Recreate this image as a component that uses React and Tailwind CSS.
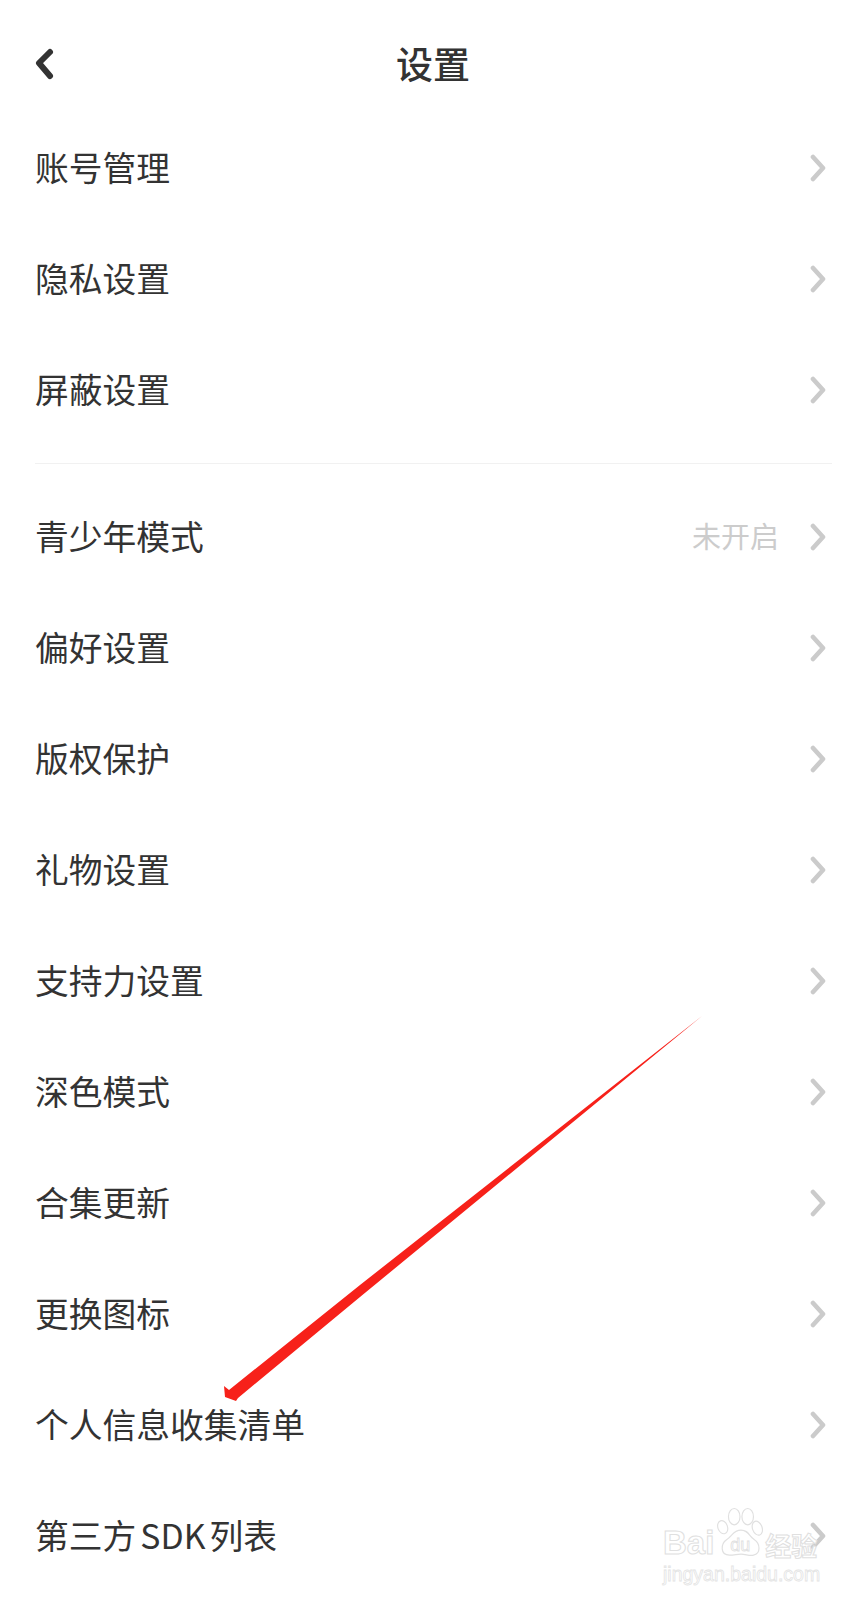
const font = { fontFamily: '"Noto Sans CJK SC", "Liberation Sans", sans-serif' };
const latin = { fontFamily: '"Liberation Sans", sans-serif' };

const groupOne = ['账号管理', '隐私设置', '屏蔽设置'];
const groupTwo = [
  { label: '青少年模式', value: '未开启' },
  { label: '偏好设置' },
  { label: '版权保护' },
  { label: '礼物设置' },
  { label: '支持力设置' },
  { label: '深色模式' },
  { label: '合集更新' },
  { label: '更换图标' },
  { label: '个人信息收集清单' },
  { label: '第三方 SDK 列表' },
];

function Chevron() {
  return (
    <svg width="16" height="28" viewBox="0 0 16 28" fill="none" className="shrink-0">
      <path d="M3 3L13 14L3 25" stroke="#cbcbcb" strokeWidth="4.6" strokeLinecap="round" strokeLinejoin="round" />
    </svg>
  );
}

function Row({ label, value }) {
  return (
    <div className="flex h-[111px] items-center justify-between pl-[35px] pr-[40px]">
      <span className="pb-[1px] text-[33.75px] leading-none text-[#333333] [word-spacing:-3.5px]">{label}</span>
      <div className="flex items-center gap-[31px]">
        {value && <span className="pb-[2px] text-[29px] leading-none text-[#cccccc]">{value}</span>}
        <Chevron />
      </div>
    </div>
  );
}

function Arrow() {
  return (
    <svg width="866" height="1600" viewBox="0 0 866 1600" className="pointer-events-none absolute left-0 top-0">
      <polygon
        points="702,1016 360,1297 238,1398 236,1401 225,1397 224,1386 229,1390 360,1285"
        fill="#f7211a"
      />
    </svg>
  );
}

// baidu jingyan watermark, bottom right
function Watermark() {
  return (
    <div className="pointer-events-none absolute left-[663px] top-[1506px] flex w-[160px] flex-col gap-[2px]">
      <div className="flex items-end">
        <span className="pb-[1px] text-[33px] font-bold leading-[33px] text-white [-webkit-text-stroke:1px_#e0e0e0]" style={latin}>
          Bai
        </span>
        <div className="relative ml-[1px] h-[54px] w-[50px] shrink-0">
          <svg width="50" height="54" viewBox="0 0 52 54" fill="none">
            <g stroke="#e0e0e0" strokeWidth="1.2" fill="#ffffff">
              <ellipse cx="8" cy="21" rx="5" ry="7" transform="rotate(-20 8 21)" />
              <ellipse cx="20" cy="10" rx="6" ry="8.5" />
              <ellipse cx="34" cy="10" rx="6" ry="8.5" />
              <ellipse cx="44" cy="22" rx="5" ry="7.5" transform="rotate(-20 44 22)" />
              <path d="M27 24C19 24 18 30 12 34C6 38 5 50 15 50C20 50 23 49 27 49C32 49 36 51 40 50C48 48 47 38 41 34C35 30 35 24 27 24Z" />
            </g>
          </svg>
          <span className="absolute inset-x-0 bottom-[6px] text-center text-[18px] leading-[18px] text-white [-webkit-text-stroke:0.8px_#e0e0e0]" style={latin}>
            du
          </span>
        </div>
        <span className="pb-[1px] text-[26px] font-bold leading-[28px] text-white [-webkit-text-stroke:1px_#e0e0e0]">经验</span>
      </div>
      <span className="text-[19.5px] leading-[24px] text-white [-webkit-text-stroke:0.8px_#e4e4e4]" style={latin}>
        jingyan.baidu.com
      </span>
    </div>
  );
}

export default function App() {
  return (
    <div className="relative h-[1600px] w-[866px] overflow-hidden bg-white" style={font}>
      <header className="grid h-[112px] grid-cols-[1fr_auto_1fr] items-center pt-[16px]">
        <svg width="24" height="36" viewBox="0 0 24 36" fill="none" className="ml-[32px]">
          <path d="M18 6L7 17L18 30" stroke="#333333" strokeWidth="6" strokeLinecap="round" strokeLinejoin="round" />
        </svg>
        <h1 className="pb-[1px] text-[37px] font-medium leading-none text-[#333333]">设置</h1>
      </header>

      <section>
        {groupOne.map((label) => (
          <Row key={label} label={label} />
        ))}
      </section>

      <div className="mb-[17px] ml-[35px] mr-[34px] mt-[18px] h-px bg-[#f1f1f1]" />

      <section>
        {groupTwo.map((item) => (
          <Row key={item.label} label={item.label} value={item.value} />
        ))}
      </section>

      <Arrow />
      <Watermark />
    </div>
  );
}
